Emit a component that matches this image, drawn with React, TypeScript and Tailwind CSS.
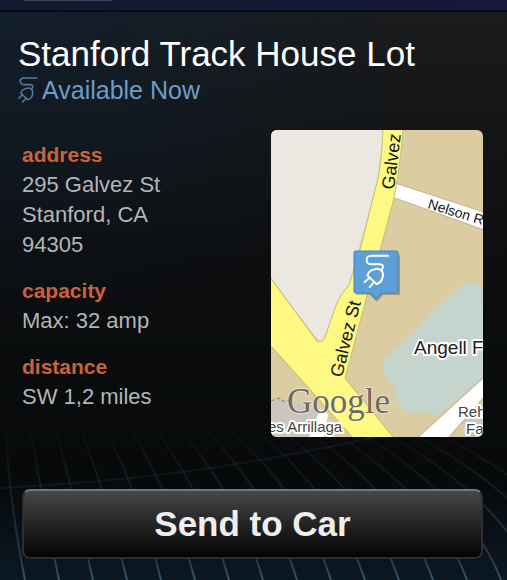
import type { ReactNode } from 'react';

const details = [
  { label: 'address', lines: ['295 Galvez St', 'Stanford, CA', '94305'] },
  { label: 'capacity', lines: ['Max: 32 amp'] },
  { label: 'distance', lines: ['SW 1,2 miles'] },
];

const gridLines = Array.from({ length: 18 }, (_, i) => i);

const PlugShape = () => (
  <g fill="none" stroke="currentColor" strokeWidth="6" strokeLinecap="round" strokeLinejoin="round">
    <path d="M129 47H79C60 47 60 73 79 73H102C116 73 117 82 109 91" />
    <path d="M67 106Q72 91 87 88Q101 84 109 91Q117 101 112 115Q108 128 94 132Z" />
    <path d="M73 113L59 126M87 126L74 141" />
  </g>
);

const Backdrop = () => (
  <svg
    className="absolute inset-x-0 bottom-0 w-full"
    viewBox="0 0 507 150"
    aria-hidden="true"
  >
    <defs>
      <linearGradient id="lineFade" gradientUnits="userSpaceOnUse" x1="0" y1="0" x2="0" y2="150">
        <stop offset="0" stopColor="#4f6470" stopOpacity="0.05" />
        <stop offset="0.4" stopColor="#4f6470" stopOpacity="0.2" />
        <stop offset="0.87" stopColor="#4f7288" stopOpacity="0.4" />
        <stop offset="1" stopColor="#4f7e9e" stopOpacity="0.6" />
      </linearGradient>
      <linearGradient id="floor" x1="0" y1="0" x2="0" y2="1">
        <stop offset="0.3" stopColor="#0b1a26" stopOpacity="0" />
        <stop offset="1" stopColor="#0b1a27" stopOpacity="0.9" />
      </linearGradient>
    </defs>
    <rect width="507" height="150" fill="url(#floor)" />
    <g fill="none" stroke="url(#lineFade)" strokeWidth="2">
      {gridLines.map((i) => (
        <path key={i} d={`M${6 + 25 * i} 0Q${9 + 33 * i} 70 ${25 + 34 * i} 150`} />
      ))}
    </g>
    <path d="M0 58Q150 50 260 30T400 0" fill="none" stroke="#4f6470" strokeOpacity="0.14" strokeWidth="2" />
  </svg>
);

const MapView = () => (
  <svg
    className="block w-full rounded-md"
    viewBox="0 0 212 307"
    role="img"
    aria-label="Map"
    fontFamily="'Liberation Sans', sans-serif"
  >
    <rect width="212" height="307" fill="#dccca2" />
    {/* Campus area west of the street */}
    <path d="M0 0H113L106 52L78 155L50 214L0 150Z" fill="#ebe7e1" />
    {/* Field */}
    <path
      d="M194 154L202 151L212 157V248L166 286L150 282L136 283L126 272L123 257L114 247L112 230L144 201L164 178L179 167Z"
      fill="#c5d4cd"
    />
    {/* Buildings */}
    <path d="M0 272L8 269L14 273L20 270L29 274L48 282L40 307H0Z" fill="#cbc6bd" />
    <path d="M0 271L8 268L14 272L20 269" fill="none" stroke="#86837c" strokeDasharray="4 2" />
    <path d="M190 290L212 274V307H197Z" fill="#cbc6bd" />
    <path d="M49 279L57 284L53 307H38Z" fill="#fff" />
    {/* White roads */}
    <path d="M124 53L213 82V100L121 67Z" fill="#fff" stroke="#c2b794" />
    <path d="M213 247L146 308H177L213 267Z" fill="#fff" stroke="#b9b4a4" />
    {/* Main roads */}
    <path
      d="M112 -1C111 20 110 38 106 52L89 120L78 155Q67 168 64 178L54 207Q51 213 46 211L-1 147V215L44 265L82 308H123L74 248L94 173L109 120L122 72Q129 40 132 -1Z"
      fill="#fef982"
      stroke="#c9bd74"
    />
    <g fill="#141414" fontSize="18">
      <text transform="translate(123 60) rotate(-83)">Galvez</text>
      <text transform="translate(71 248) rotate(-76)">Galvez St</text>
      <text transform="translate(156 78) rotate(17)" fontSize="14">Nelson Rd</text>
    </g>
    <g fill="#202020" stroke="#fff" strokeWidth="4" strokeLinejoin="round" paintOrder="stroke">
      <text x="143" y="224" fontSize="19">Angell F</text>
      <text x="-3" y="302" fontSize="15" fill="#444">es Arrillaga</text>
      <text x="187" y="287" fontSize="15" fill="#444">Reh</text>
      <text x="195" y="304" fontSize="15" fill="#444">Fa</text>
    </g>
    <text
      x="16"
      y="283"
      fontSize="35"
      fontFamily="'Liberation Serif', serif"
      fill="#71685f"
      stroke="#fff"
      strokeOpacity="0.45"
      strokeWidth="2"
      paintOrder="stroke"
    >
      Google
    </text>
    {/* Charger pin */}
    <path d="M86 124H127Q129 124 129 127V165H112L106 172L99 165H85Z" fill="#000" opacity="0.25" />
    <path
      d="M85 121H125Q127 121 127 123V161Q127 163 125 163H111L105 169L99 163H85Q83 163 83 161V123Q83 121 85 121Z"
      fill="#5da0d8"
      stroke="#4585b8"
    />
    <svg x="74" y="110" width="60" height="65" viewBox="0 0 180 195" color="#fff">
      <PlugShape />
    </svg>
  </svg>
);

const Detail = ({ label, children }: { label: string; children: ReactNode }) => (
  <div className="leading-[30px]">
    <dt className="text-[21px] font-bold text-[#cd6238]">{label}</dt>
    <dd className="text-[22px] text-[#b3b6b9]">{children}</dd>
  </div>
);

const App = () => {
  return (
    <div className="relative min-h-screen overflow-hidden bg-[#060708] font-['Liberation_Sans',Arial,sans-serif]">
      <div className="absolute inset-0 bg-linear-to-b from-[#1b1c1d] via-[#0c0e10] via-45% to-[#050708]" />
      <div className="absolute inset-x-0 top-0 h-2/3 bg-radial-[at_0%_0%] from-[#0c2035]/60 to-transparent to-60%" />
      <Backdrop />

      <div className="relative">
        <div className="h-3 border-b-2 border-[#050b18] bg-linear-to-r from-[#111a2e] to-[#15183a]">
          <div className="ml-6 h-px w-22 bg-[#434a57]" />
        </div>

        <main className="pr-6 pl-[22px]">
          <header className="-ml-1 pt-5">
            <h1 className="text-[35px] leading-11 text-white">Stanford Track House Lot</h1>
            <p className="flex items-center gap-1 text-[25px] leading-7 text-[#6f9cc8]">
              <svg className="h-7 w-5 text-[#54799a]" viewBox="56 40 78 108" aria-hidden="true">
                <PlugShape />
              </svg>
              Available Now
            </p>
          </header>

          <div className="mt-[26px] flex items-start justify-between">
            <dl className="flex flex-col gap-4 pt-[10px]">
              {details.map(({ label, lines }) => (
                <Detail key={label} label={label}>
                  {lines.map((line) => (
                    <span key={line} className="block">{line}</span>
                  ))}
                </Detail>
              ))}
            </dl>
            <div className="w-[46%]">
              <MapView />
            </div>
          </div>

          <button
            type="button"
            className="mt-[52px] mb-5 block h-[70px] w-full rounded-lg border-2 border-[#2c2e30] border-t-[#75787a] bg-linear-to-b from-[#484848] via-[#242424] to-[#050505] text-[35px] font-bold text-[#eee]"
          >
            Send to Car
          </button>
        </main>
      </div>
    </div>
  );
};

export default App;
